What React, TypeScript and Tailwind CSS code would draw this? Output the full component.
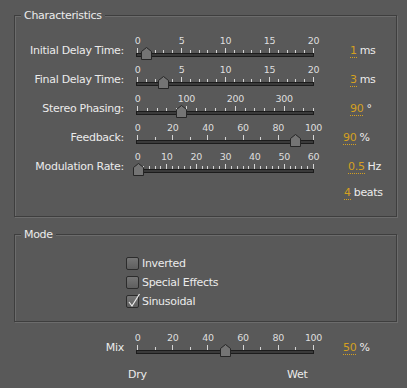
import React from 'react'

type Scale = { min: number; max: number; value: number; labelStep: number; tickStep: number }

const Slider = ({ min, max, value, labelStep, tickStep }: Scale) => {
    const pos = (v: number) => 10 + ((v - min) / (max - min)) * 176
    const ticks: number[] = []
    for (let v = min; v <= max; v += tickStep) ticks.push(v)
    const labels: number[] = []
    for (let v = min; v <= max; v += labelStep) labels.push(v)
    const tx = Math.round(pos(value)) + 0.5

    return (
        <svg width={200} height={24} className="ml-[3px] shrink-0">
            {labels.map((v) => (
                <text
                    key={v}
                    x={pos(v) + 0.5}
                    y={8}
                    textAnchor="middle"
                    fontSize={9.5}
                    fill="#dedede"
                    fontFamily="DejaVu Sans, sans-serif"
                >
                    {v}
                </text>
            ))}
            {ticks.map((v) => {
                const x = Math.round(pos(v)) + 0.5
                const major = (v - min) % labelStep === 0
                return <line key={v} x1={x} x2={x} y1={major ? 12 : 14} y2={17} stroke="#d4d4d4" />
            })}
            <rect x={9.5} y={17.5} width={177} height={3} fill="#3a3a3a" stroke="#1c1c1c" />
            {/* thumb */}
            <path
                d={`M${tx} 11.5 L${tx + 5} 15.5 V23.5 H${tx - 5} V15.5 Z`}
                fill="#747474"
                stroke="#262626"
            />
        </svg>
    )
}

type RowProps = Scale & { label: string; shown: string; unit: string; valueClass: string }

const Row = ({ label, shown, unit, valueClass, ...scale }: RowProps) => {
    return (
        <div className="flex h-[29px] items-start">
            <div className="w-[109px] shrink-0 pt-[8px] text-right leading-[13px]">{label}</div>
            <Slider {...scale} />
            <div className={`flex items-baseline pt-[8px] ${valueClass}`}>
                <span className="border-b border-dotted border-[#d4a021] leading-[12px] text-[#d4a021]">{shown}</span>
                <span className="ml-[3px] leading-[13px]">{unit}</span>
            </div>
        </div>
    )
}

const Check = ({ label, checked }: { label: string; checked?: boolean }) => {
    return (
        <div className="flex h-[19px] items-center">
            <span className="relative h-[13px] w-[13px] shrink-0 rounded-[2px] border border-[#2c2c2c] bg-gradient-to-b from-[#767676] to-[#5e5e5e]">
                {checked && (
                    <svg className="absolute left-[0px] top-[-3px]" width="14" height="15" viewBox="0 0 14 15">
                        <path d="M2 9 L5 13 L12.5 1" fill="none" stroke="#ececec" strokeWidth="1.2" />
                    </svg>
                )}
            </span>
            <span className="ml-[3px] leading-[13px]">{label}</span>
        </div>
    )
}

const groupBox =
    'ml-[14px] w-[383px] border border-[#3e3e3e] shadow-[1px_1px_0_#6c6c6c,inset_1px_1px_0_#6c6c6c]'

export default function App() {
    return (
        <div className="h-[388px] w-[407px] overflow-hidden bg-[#595959] pt-[9px] font-['DejaVu_Sans',sans-serif] text-[11px] tracking-[-0.3px] text-[#ebebeb]">
            <fieldset className={`${groupBox} pb-[16px]`}>
                <legend className="ml-[6px] bg-[#595959] px-[3px] leading-[13px]">Characteristics</legend>
                <div className="pt-[14px]">
                    <Row label="Initial Delay Time:" min={0} max={20} value={1} labelStep={5} tickStep={1} shown="1" unit="ms" valueClass="ml-[23px]" />
                    <Row label="Final Delay Time:" min={0} max={20} value={3} labelStep={5} tickStep={1} shown="3" unit="ms" valueClass="ml-[23px]" />
                    <Row label="Stereo Phasing:" min={0} max={360} value={90} labelStep={100} tickStep={20} shown="90" unit="°" valueClass="ml-[23px]" />
                    <Row label="Feedback:" min={0} max={100} value={90} labelStep={20} tickStep={10} shown="90" unit="%" valueClass="ml-[16px]" />
                    <Row label="Modulation Rate:" min={0} max={60} value={0.5} labelStep={10} tickStep={2} shown="0.5" unit="Hz" valueClass="ml-[21px]" />
                    <div className="mt-[5px] flex items-baseline pl-[329px]">
                        <span className="border-b border-dotted border-[#d4a021] leading-[12px] text-[#d4a021]">4</span>
                        <span className="ml-[3px] leading-[13px]">beats</span>
                    </div>
                </div>
            </fieldset>

            <fieldset className={`${groupBox} mt-[11px] pb-[10px]`}>
                <legend className="ml-[6px] bg-[#595959] px-[3px] leading-[13px]">Mode</legend>
                <div className="pl-[111px] pt-[13px]">
                    <Check label="Inverted" />
                    <Check label="Special Effects" />
                    <Check label="Sinusoidal" checked />
                </div>
            </fieldset>

            <div className="mt-[11px] pl-[15px]">
                <Row label="Mix" min={0} max={100} value={50} labelStep={20} tickStep={10} shown="50" unit="%" valueClass="ml-[16px]" />
            </div>
            <div className="mt-[6px] flex pl-[128px] leading-[13px]">
                <span className="w-[159px]">Dry</span>
                <span>Wet</span>
            </div>
        </div>
    )
}
